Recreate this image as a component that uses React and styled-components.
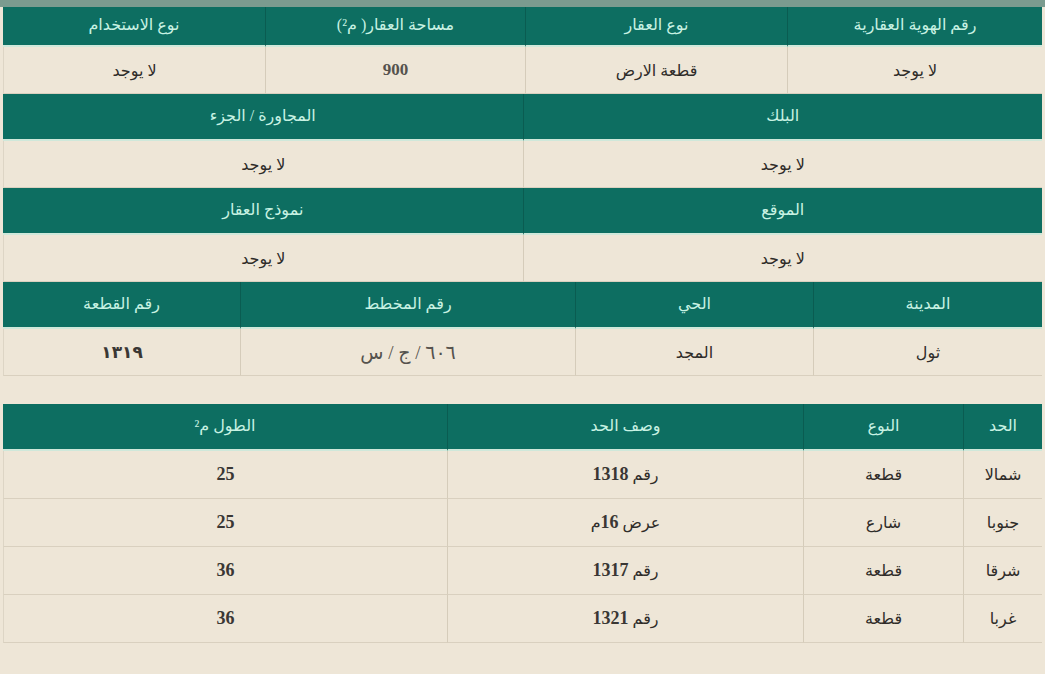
import React from "react";
import styled, { createGlobalStyle } from "styled-components";

const GlobalStyle = createGlobalStyle`
  html, body {
    margin: 0;
    padding: 0;
    background: #eee6d7;
  }
  body {
    font-family: "Liberation Serif", "DejaVu Sans", serif;
  }
`;

const Page = styled.div`
  direction: rtl;
  width: 1045px;
  height: 674px;
  overflow: hidden;
  background: #eee6d7;
`;

const TopStrip = styled.div`
  height: 7px;
  background: #7b9b8f;
`;

const Content = styled.div`
  display: flex;
  flex-direction: column;
  padding: 0 3px;
`;

const Table = styled.div`
  display: flex;
  flex-direction: column;
  margin-top: ${props => props.gap || 0}px;
`;

const Row = styled.div`
  display: grid;
  grid-template-columns: ${props => props.cols};
`;

const HeadCell = styled.div`
  display: flex;
  align-items: center;
  justify-content: center;
  box-sizing: border-box;
  height: ${props => props.h || 47}px;
  padding-bottom: 3px;
  background: #0d6e61;
  color: #c8f2e3;
  font-size: 16px;
  border-bottom: 2px solid #cfe8da;
  border-left: 1px solid #0a5c51;
  &:last-child {
    border-left: none;
  }
`;

const DataCell = styled.div`
  display: flex;
  align-items: center;
  justify-content: center;
  box-sizing: border-box;
  height: ${props => props.h || 47}px;
  color: #2f2c29;
  font-size: 16px;
  white-space: pre;
  border-bottom: 1px solid #d9d0bf;
  border-left: 1px solid #d5ccba;
  &:last-child {
    border-left: 1px solid #ddd5c5;
  }
`;

const Num = styled.span`
  font-family: "Liberation Serif", "DejaVu Sans", serif;
  font-size: ${props => props.size || 18}px;
  font-weight: ${props => (props.light ? "normal" : "bold")};
  color: ${props => (props.muted ? "#55524d" : "#3a3734")};
`;

const NONE = "لا يوجد";

const infoSections = [
  {
    cols: "255fr 262fr 260fr 262fr",
    headH: 40,
    heads: ["رقم الهوية العقارية", "نوع العقار", "مساحة العقار( م²)", "نوع الاستخدام"],
    values: [NONE, "قطعة الارض", <Num muted size={17}>900</Num>, NONE]
  },
  {
    cols: "1fr 1fr",
    heads: ["البلك", "المجاورة / الجزء"],
    values: [NONE, NONE]
  },
  {
    cols: "1fr 1fr",
    heads: ["الموقع", "نموذج العقار"],
    values: [NONE, NONE]
  },
  {
    cols: "229fr 238fr 335fr 237fr",
    heads: ["المدينة", "الحي", "رقم المخطط", "رقم القطعة"],
    values: [
      "ثول",
      "المجد",
      <Num muted light size={19}>٦٠٦ / ج / س</Num>,
      <Num size={17}>١٣١٩</Num>
    ]
  }
];

const boundCols = "79fr 160fr 356fr 444fr";
const boundHeads = ["الحد", "النوع", "وصف الحد", "الطول م²"];
const bounds = [
  ["شمالا", "قطعة", "رقم ", "1318", "", "25"],
  ["جنوبا", "شارع", "عرض ", "16", "م", "25"],
  ["شرقا", "قطعة", "رقم ", "1317", "", "36"],
  ["غربا", "قطعة", "رقم ", "1321", "", "36"]
];

export default function App() {
  return (
    <Page>
      <GlobalStyle />
      <TopStrip />
      <Content>
        <Table>
          {infoSections.map((sec, i) => (
            <React.Fragment key={i}>
              <Row cols={sec.cols}>
                {sec.heads.map(h => (
                  <HeadCell key={h} h={sec.headH}>
                    {h}
                  </HeadCell>
                ))}
              </Row>
              <Row cols={sec.cols}>
                {sec.values.map((v, j) => (
                  <DataCell key={j}>{v}</DataCell>
                ))}
              </Row>
            </React.Fragment>
          ))}
        </Table>

        <Table gap={28}>
          <Row cols={boundCols}>
            {boundHeads.map(h => (
              <HeadCell key={h}>{h}</HeadCell>
            ))}
          </Row>
          {bounds.map((r, i) => (
            <Row cols={boundCols} key={i}>
              <DataCell h={48}>{r[0]}</DataCell>
              <DataCell h={48}>{r[1]}</DataCell>
              <DataCell h={48}>
                <span>
                  {r[2]}
                  <Num>{r[3]}</Num>
                  {r[4]}
                </span>
              </DataCell>
              <DataCell h={48}>
                <Num>{r[5]}</Num>
              </DataCell>
            </Row>
          ))}
        </Table>
      </Content>
    </Page>
  );
}
